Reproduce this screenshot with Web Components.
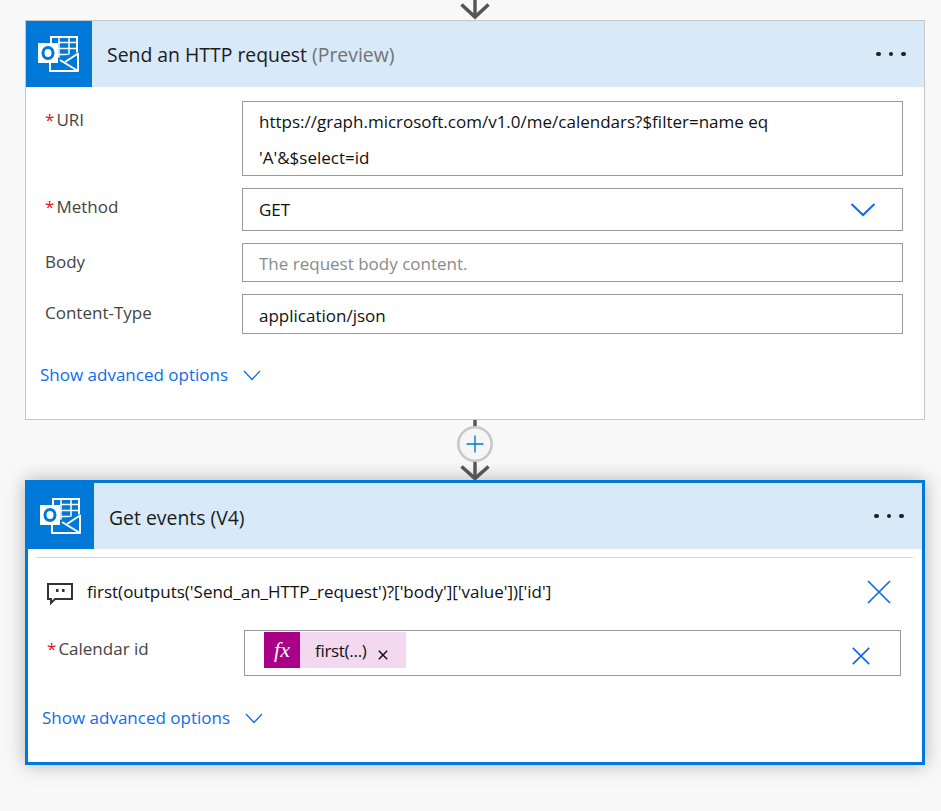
<!DOCTYPE html>
<html><head><meta charset="utf-8"><style>
html,body{margin:0;padding:0;background:#f8f8f8;height:811px;overflow:hidden}
body{font-family:"Open Sans","Noto Sans",sans-serif;color:#111}
flow-page{display:block}
</style></head><body>
<flow-page>
 <flow-connector kind="top"></flow-connector>
 <flow-card title-text="Send an HTTP request" note="(Preview)">
  <form-field label="URI" required h="75" gap="12" mt="14"><wrap-lines first="https://graph.microsoft.com/v1.0/me/calendars?$filter=name eq" second="'A'&amp;$select=id"></wrap-lines></form-field>
  <form-field label="Method" required h="43" gap="12" icon="chevron" flush>GET</form-field>
  <form-field label="Body" h="39" gap="12" placeholder>The request body content.</form-field>
  <form-field label="Content-Type" h="40" gap="0">application/json</form-field>
  <adv-link></adv-link>
 </flow-card>
 <flow-connector kind="add"></flow-connector>
 <flow-card title-text="Get events (V4)" selected>
  <comment-row>first(outputs('Send_an_HTTP_request')?['body']['value'])['id']</comment-row>
  <form-field label="Calendar id" required h="46" gap="0" icon="close" variant="second"><fx-token>first(...)</fx-token></form-field>
  <adv-link second></adv-link>
 </flow-card>
</flow-page>
<script>
const OUTLOOK=`<svg width="41" height="36" viewBox="0 0 41 36" fill="none">
<path d="M13 8V1H39V18" stroke="#fff" stroke-width="2"/>
<path d="M21 1V22M31 1V22M20 6.500H39M20 12.500H39M20 18.500H30" stroke="#fff" stroke-width="1.500"/>
<path d="M0 7H20V27H0Z" fill="#fff"/>
<ellipse cx="10" cy="17" rx="5" ry="5.600" stroke="#0078d7" stroke-width="3"/>
<path d="M20 22L40 16V36H11V27H20Z" fill="#0078d7"/>
<path d="M12 27V35H40V17.500L27 26" stroke="#fff" stroke-width="2" stroke-linejoin="round"/>
<path d="M22 24L40 35" stroke="#fff" stroke-width="2"/>
</svg>`;
function def(name,fn){customElements.define(name,class extends HTMLElement{connectedCallback(){if(this.shadowRoot)return;const s=this.attachShadow({mode:"open"});fn(this,s)}})}
def("flow-connector",(el,s)=>{
 const top=el.getAttribute("kind")==="top";
 s.innerHTML=`<style>:host{display:block;width:900px;margin-left:25px;height:${top?20:60}px;position:relative}
 svg{position:absolute;left:430px;top:0;display:block}</style>`+(top?
 `<svg width="40" height="20" viewBox="0 0 40 20"><path d="M20 0V17" stroke="#555" stroke-width="3.400"/><path d="M6.500 4.500L20 17L33.500 4.500" fill="none" stroke="#555" stroke-width="3.600"/></svg>`:
 `<svg width="40" height="60" viewBox="0 0 40 60"><path d="M20 0V8M20 40V58" stroke="#555" stroke-width="3.400"/><path d="M6.500 46.500L20 58.500L33.500 46.500" fill="none" stroke="#555" stroke-width="3.600"/><circle cx="20" cy="24" r="16.700" fill="#f6f6f6" stroke="#c8c8c8" stroke-width="2.600"/><path d="M11.500 24H28.500M20 15.500V32.500" stroke="#0078d7" stroke-width="1.400"/></svg>`);
});
def("flow-card",(el,s)=>{
 const sel=el.hasAttribute("selected");const note=el.getAttribute("note");
 s.innerHTML=`<style>:host{display:block;width:900px;margin-left:25px;box-sizing:border-box;background:#fff;
 ${sel?"border:3px solid #0078d7;height:285px;box-shadow:0 0 18px rgba(0,0,0,.28)":"border:1px solid #c6c6c6;height:400px"}}
 header{display:flex;align-items:center;height:66px;background:#d8e9f8;color:#1c1c1c}
 .ic{width:66px;height:66px;background:#0078d7;display:flex;align-items:center;justify-content:center;flex:none}
 .ic svg{margin-right:2px;display:block}
 .t{margin-left:15px;font-size:19.400px;white-space:nowrap;line-height:26px;position:relative;top:${sel?2:1}px}
 .n{color:#737373}
 .dots{margin-left:auto;margin-right:18.500px;display:flex;gap:7.700px}
 .dots i{width:4.600px;height:4.600px;border-radius:50%;background:#222;display:block}
 </style><header><div class="ic">${OUTLOOK}</div><div class="t">${el.getAttribute("title-text")}${note?` <span class="n">${note}</span>`:""}</div><div class="dots"><i></i><i></i><i></i></div></header><main><slot></slot></main>`;
});
def("form-field",(el,s)=>{
 const sec=el.getAttribute("variant")==="second";const icon=el.getAttribute("icon");const ph=el.hasAttribute("placeholder");
 const ic=icon==="chevron"?`<svg width="26" height="16" viewBox="0 0 26 16"><path d="M1.500 2L13 13L24.500 2" fill="none" stroke="#0f6cee" stroke-width="2"/></svg>`:icon==="close"?`<svg width="18" height="18" viewBox="0 0 18 18"><path d="M.8 .8L17.200 17.200M17.200 .8L.8 17.200" stroke="#0f6cee" stroke-width="1.700"/></svg>`:"";
 s.innerHTML=`<style>:host{display:flex;margin:${el.getAttribute("mt")||0}px 21px ${el.getAttribute("gap")}px 19px;font-size:17px}
 ${sec?":host{margin:5px 21px 0 19px}":""}
 label{width:197px;flex:none;color:#444;line-height:24px;padding-top:7px;white-space:nowrap}
 b{color:#e81123;font-weight:400;margin-right:2px}
 .box{box-sizing:border-box;flex:1;height:${el.getAttribute("h")}px;border:1px solid #999;background:#fff;display:flex;align-items:center;padding:0 ${icon==="chevron"?26:icon==="close"?30:16}px 0 ${sec?19:16}px;color:${ph?"#8a8a8a":"#111"};${sec?"align-items:flex-start;padding-top:1px":""}}
 .v{flex:1;white-space:nowrap;position:relative;${sec||el.hasAttribute("flush")?"":"top:1px"}}
 ${sec?"svg{margin-top:15px}":""}
 </style><label>${el.hasAttribute("required")?"<b>*</b>":""}${el.getAttribute("label")}</label><div class="box"><div class="v"><slot></slot></div>${ic}</div>`;
});
def("wrap-lines",(el,s)=>{
 s.innerHTML=`<style>:host{display:block;line-height:36px}</style>${el.getAttribute("first").replace(/&/g,"&amp;")}<br>${el.getAttribute("second").replace(/&/g,"&amp;")}`;
});
def("fx-token",(el,s)=>{
 s.innerHTML=`<style>:host{display:inline-flex;align-items:center;width:142px;height:36px;background:#f2d9ef;color:#111;position:relative}
 .f{width:36px;height:36px;background:#aa0088;color:#fff;font:italic 400 22px "Liberation Serif",serif;display:flex;align-items:center;justify-content:center;flex:none}
 .tx{margin-left:15px;font-size:17px;letter-spacing:-.3px;position:relative}
 svg{position:absolute;left:114px;top:18px}</style><span class="f">fx</span><span class="tx"><slot></slot></span><svg width="10" height="10" viewBox="0 0 10 10"><path d="M.8 .8L9.200 9.200M9.200 .8L.8 9.200" stroke="#111" stroke-width="1.500"/></svg>`;
});
def("comment-row",(el,s)=>{
 s.innerHTML=`<style>:host{display:flex;align-items:center;margin:8px 9px 0 8px;border-top:1px solid #d4d4d4;height:67px;font-size:17px;color:#111;padding-left:11px;padding-right:22.500px}
 .m{width:26px;flex:none;margin-right:14px;display:flex;position:relative;top:2px}
 .tx{flex:1;white-space:nowrap}</style>
 <span class="m"><svg width="26" height="22" viewBox="0 0 26 22"><path d="M1 1H25V16H8L4 20V16H1Z" fill="none" stroke="#333" stroke-width="2"/><path d="M9 6H11.500V9H9ZM15 6H17.500V9H15Z" fill="#333"/></svg></span>
 <span class="tx"><slot></slot></span>
 <svg width="24" height="24" viewBox="0 0 24 24"><path d="M1 1L23 23M23 1L1 23" stroke="#0f6cee" stroke-width="1.700"/></svg>`;
});
def("adv-link",(el,s)=>{
 s.innerHTML=`<style>:host{display:flex;align-items:center;gap:15px;margin:${el.hasAttribute("second")?"29px":"28px"} 0 0 14px;color:#0f6cee;font-size:17px;line-height:26px;white-space:nowrap}</style>Show advanced options<svg width="18" height="11" viewBox="0 0 18 11"><path d="M1 1L9 9.500L17 1" fill="none" stroke="#0f6cee" stroke-width="1.300"/></svg>`;
});
</script>
</body></html>
